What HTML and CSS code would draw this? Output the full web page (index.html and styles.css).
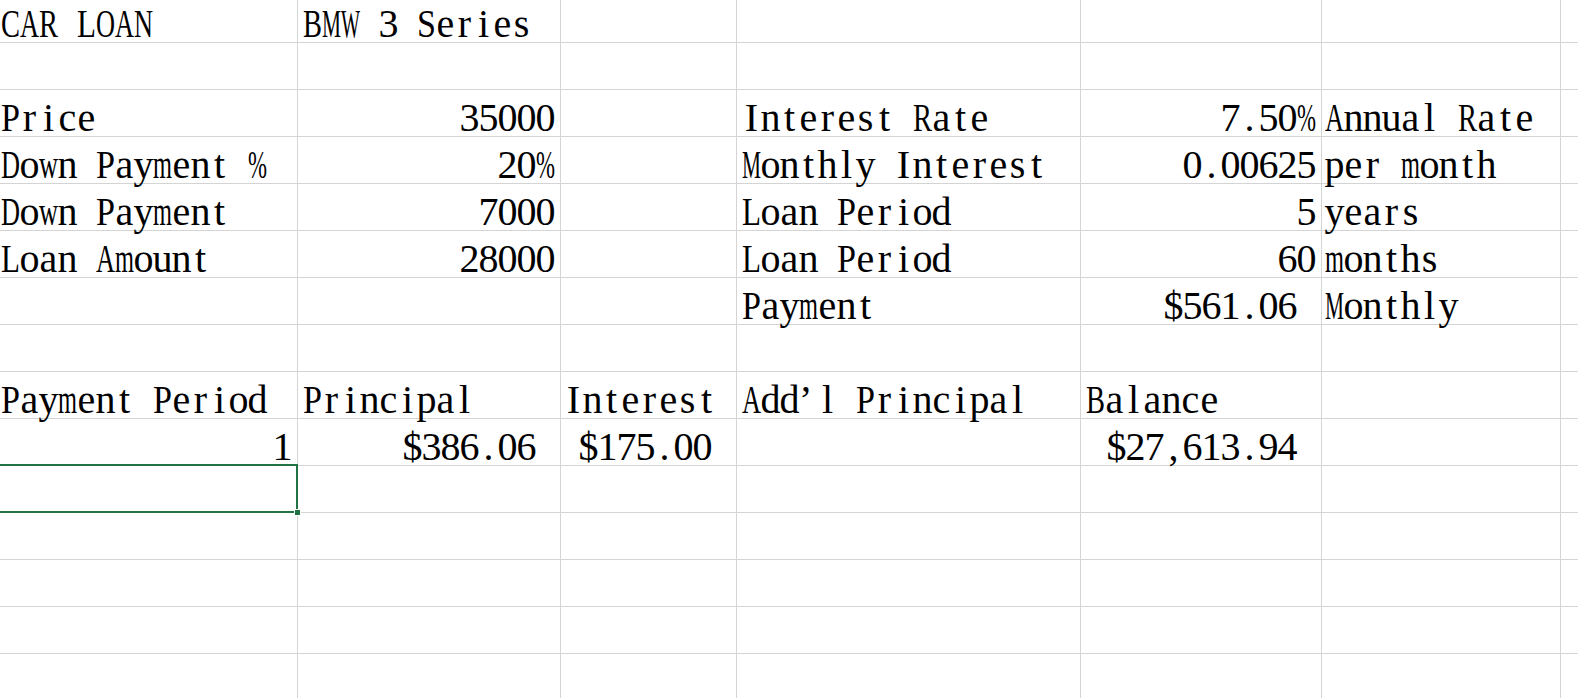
FILE: index.html
```html
<!DOCTYPE html>
<html lang="en">
<head>
<meta charset="utf-8">
<title>Car Loan</title>
<link rel="stylesheet" href="styles.css">
</head>
<body>
<div class="sheet">
  <div class="c"><span class="t">CAR LOAN</span></div>
  <div class="c"><span class="t">BMW 3 Series</span></div>
  <div class="c"></div><div class="c"></div><div class="c"></div><div class="c"></div><div class="c"></div>

  <div class="c"></div><div class="c"></div><div class="c"></div><div class="c"></div><div class="c"></div><div class="c"></div><div class="c"></div>

  <div class="c"><span class="t">Price</span></div>
  <div class="c r"><span class="t">35000</span></div>
  <div class="c"></div>
  <div class="c"><span class="t">Interest Rate</span></div>
  <div class="c r"><span class="t">7.50%</span></div>
  <div class="c"><span class="t">Annual Rate</span></div>
  <div class="c"></div>

  <div class="c"><span class="t">Down Payment %</span></div>
  <div class="c r"><span class="t">20%</span></div>
  <div class="c"></div>
  <div class="c"><span class="t">Monthly Interest</span></div>
  <div class="c r"><span class="t">0.00625</span></div>
  <div class="c"><span class="t">per month</span></div>
  <div class="c"></div>

  <div class="c"><span class="t">Down Payment</span></div>
  <div class="c r"><span class="t">7000</span></div>
  <div class="c"></div>
  <div class="c"><span class="t">Loan Period</span></div>
  <div class="c r"><span class="t">5</span></div>
  <div class="c"><span class="t">years</span></div>
  <div class="c"></div>

  <div class="c"><span class="t">Loan Amount</span></div>
  <div class="c r"><span class="t">28000</span></div>
  <div class="c"></div>
  <div class="c"><span class="t">Loan Period</span></div>
  <div class="c r"><span class="t">60</span></div>
  <div class="c"><span class="t">months</span></div>
  <div class="c"></div>

  <div class="c"></div><div class="c"></div><div class="c"></div>
  <div class="c"><span class="t">Payment</span></div>
  <div class="c r"><span class="t">$561.06 </span></div>
  <div class="c"><span class="t">Monthly</span></div>
  <div class="c"></div>

  <div class="c"></div><div class="c"></div><div class="c"></div><div class="c"></div><div class="c"></div><div class="c"></div><div class="c"></div>

  <div class="c"><span class="t">Payment Period</span></div>
  <div class="c"><span class="t">Principal</span></div>
  <div class="c"><span class="t">Interest</span></div>
  <div class="c"><span class="t">Add’l Principal</span></div>
  <div class="c"><span class="t">Balance</span></div>
  <div class="c"></div><div class="c"></div>

  <div class="c r"><span class="t">1</span></div>
  <div class="c r"><span class="t">$386.06 </span></div>
  <div class="c r"><span class="t">$175.00 </span></div>
  <div class="c"></div>
  <div class="c r"><span class="t">$27,613.94 </span></div>
  <div class="c"></div><div class="c"></div>

  <div class="c sel"></div><div class="c"></div><div class="c"></div><div class="c"></div><div class="c"></div><div class="c"></div><div class="c"></div>
  <div class="c"></div><div class="c"></div><div class="c"></div><div class="c"></div><div class="c"></div><div class="c"></div><div class="c"></div>
  <div class="c"></div><div class="c"></div><div class="c"></div><div class="c"></div><div class="c"></div><div class="c"></div><div class="c"></div>
  <div class="c"></div><div class="c"></div><div class="c"></div><div class="c"></div><div class="c"></div><div class="c"></div><div class="c"></div>
  <div class="c"></div><div class="c"></div><div class="c"></div><div class="c"></div><div class="c"></div><div class="c"></div><div class="c"></div>
</div>
<script src="script.js"></script>
</body>
</html>
```

FILE: styles.css
```css
html, body {
  margin: 0;
  padding: 0;
  background: #ffffff;
  overflow: hidden;
}

body {
  width: 1578px;
  height: 698px;
}

.sheet {
  display: grid;
  grid-template-columns: 298px 263px 176px 344px 241px 239px 140px;
  grid-template-rows: repeat(15, 47px);
  margin-top: -4px;
  font-family: "Liberation Serif", "Times New Roman", serif;
  font-size: 40px;
  color: #000000;
}

.c {
  box-sizing: border-box;
  min-width: 0;
  border-right: 1px solid #d4d4d4;
  border-bottom: 1px solid #d4d4d4;
  padding: 4.5px 3px 0 5px;
  line-height: 46px;
  white-space: nowrap;
}

.c:nth-child(7n+1) {
  padding-left: 1px;
}

.c:nth-child(7n+3),
.c:nth-child(7n+6) {
  padding-left: 3px;
}

.r {
  text-align: right;
  padding-right: 5px;
}

.ch {
  display: inline-flex;
  justify-content: center;
  width: 19px;
}

.ch.w {
  justify-content: flex-start;
}

.g {
  flex-shrink: 0;
}

.sel {
  position: relative;
}

.sel::after {
  content: "";
  position: absolute;
  top: -2px;
  left: -3px;
  right: -1px;
  bottom: -1px;
  border: 2px solid #217346;
  z-index: 2;
}

.sel::before {
  content: "";
  position: absolute;
  right: -4px;
  bottom: -4px;
  width: 5px;
  height: 5px;
  background: #217346;
  border: 1px solid #ffffff;
  z-index: 3;
}
```

FILE: script.js
```js
(function () {
  var cells = document.querySelectorAll('.t');
  var glyphs = [];
  cells.forEach(function (el) {
    var txt = el.textContent;
    el.textContent = '';
    Array.from(txt).forEach(function (ch) {
      var box = document.createElement('span');
      box.className = ch === '\u2019' ? 'ch w' : 'ch';
      var g = document.createElement('span');
      g.className = 'g';
      g.textContent = ch === ' ' ? '\u00a0' : ch;
      box.appendChild(g);
      el.appendChild(box);
      glyphs.push([box, g]);
    });
  });
  var widths = glyphs.map(function (p) { return p[1].getBoundingClientRect().width; });
  glyphs.forEach(function (p, i) {
    var w = widths[i];
    if (w > 20.5) {
      p[0].style.transform = 'scaleX(' + (19 / w).toFixed(3) + ')';
    }
  });
})();
```
